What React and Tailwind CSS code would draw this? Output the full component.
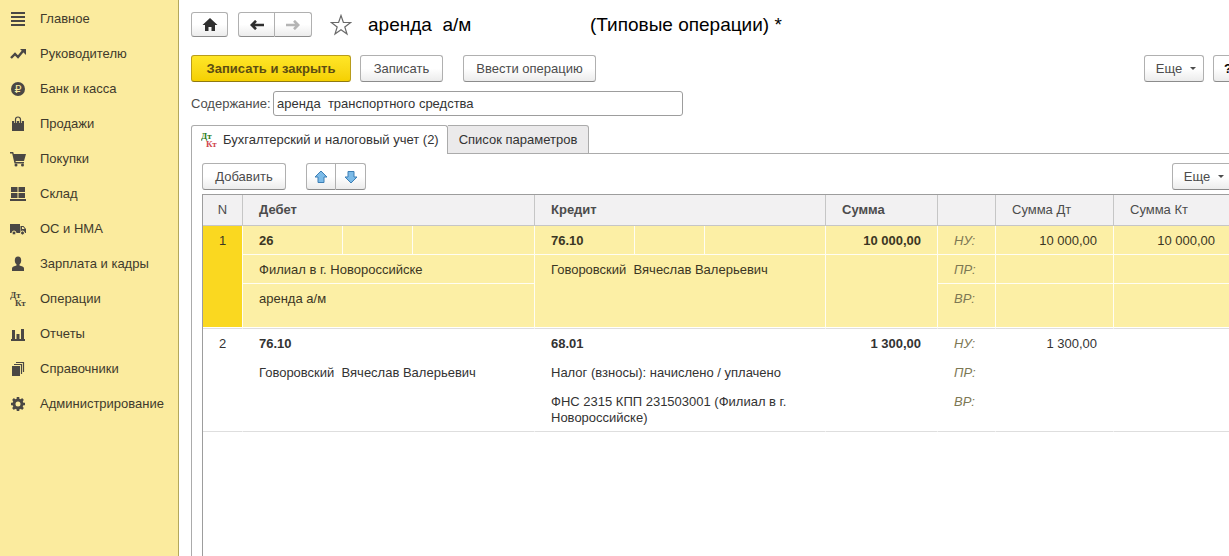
import React, { useState } from 'react';

const DtKt = ({ top, bottom }) => (
  <svg width="16" height="16" viewBox="0 0 16 16" fontFamily="Liberation Serif, serif" fontWeight="bold" fontSize="9">
    <text x="0" y="7" fill={top}>Дт</text>
    <text x="5" y="15" fill={bottom}>Кт</text>
  </svg>
);

const icons = {
  menu: <path d="M1 1h14v2H1zM1 5h14v2H1zM1 9h14v2H1zM1 13h14v2H1z" />,
  trend: (
    <>
      <path d="M1 12l4-4 3 3 5-6" fill="none" stroke="currentColor" strokeWidth="2.4" />
      <path d="M10 3h6v6z" />
    </>
  ),
  ruble: (
    <>
      <circle cx="8" cy="8" r="7" />
      <text x="8" y="12" textAnchor="middle" fontSize="11" fontFamily="DejaVu Sans, sans-serif" fill="#fbeb9e">₽</text>
    </>
  ),
  bag: (
    <>
      <path d="M2 5h12v10H2z" />
      <path d="M5.5 7V3.5a2.5 2.5 0 0 1 5 0V7" fill="none" stroke="#fbeb9e" strokeWidth="2.6" />
      <path d="M5.5 7V3.5a2.5 2.5 0 0 1 5 0V7" fill="none" stroke="currentColor" strokeWidth="1.2" />
    </>
  ),
  cart: (
    <>
      <path d="M0 1h3.2l.6 2H16l-2 7H5.5l.3 1H14v1.5H4.5L2.2 2.5H0z" />
      <circle cx="6" cy="14" r="1.5" />
      <circle cx="12.5" cy="14" r="1.5" />
    </>
  ),
  store: <path d="M1 1h6.5v5H1zM8.5 1H15v5H8.5zM1 7h6.5v5H1zM8.5 7H15v5H8.5zM0 13h16v2H0z" />,
  truck: (
    <>
      <path d="M0 3h10v9H0zM10.5 5h3L16 8v4h-5.5z" />
      <path d="M12 6h1.2l1.5 2H12z" fill="#fbeb9e" />
      <circle cx="4" cy="12" r="2" stroke="#fbeb9e" />
      <circle cx="12.5" cy="12" r="2" stroke="#fbeb9e" />
    </>
  ),
  person: (
    <>
      <ellipse cx="8" cy="4.5" rx="3.2" ry="3.9" />
      <path d="M6.5 7h3v2.5L12.5 10.5q1.500.5 1.500 2V15H2v-2.500q0-1.500 1.500-2l3-1z" />
    </>
  ),
  chart: <path d="M1 13h14v2H1zM2 4h3v10H2zM6.500 8h3v6h-3zM11 3h3v11h-3z" />,
  books: (
    <>
      <path d="M2 5h8v10H2z" />
      <path d="M4 3.500h7.500V13M6 1.500h7.500V11" fill="none" stroke="currentColor" strokeWidth="1.200" />
    </>
  ),
  gear: (
    <>
      <circle cx="8" cy="8" r="4" fill="none" stroke="currentColor" strokeWidth="3" />
      <path d="M8 1v3M8 12v3M1 8h3M12 8h3M3 3l2.200 2.200M10.800 10.800L13 13M3 13l2.200-2.200M10.800 5.200L13 3" stroke="currentColor" strokeWidth="2.600" />
    </>
  ),
};

const sections = [
  { icon: 'menu', title: 'Главное' },
  { icon: 'trend', title: 'Руководителю' },
  { icon: 'ruble', title: 'Банк и касса' },
  { icon: 'bag', title: 'Продажи' },
  { icon: 'cart', title: 'Покупки' },
  { icon: 'store', title: 'Склад' },
  { icon: 'truck', title: 'ОС и НМА' },
  { icon: 'person', title: 'Зарплата и кадры' },
  { icon: 'dtkt', title: 'Операции' },
  { icon: 'chart', title: 'Отчеты' },
  { icon: 'books', title: 'Справочники' },
  { icon: 'gear', title: 'Администрирование' },
];

const Sidebar = () => (
  <nav className="w-[179px] shrink-0 bg-[#fbeb9e] border-r border-[#b3a75c] pt-px">
    {sections.map(({ icon, title }) => (
      <a key={title} href="#" className="flex items-center gap-3.5 h-[35px] pl-2.5 text-[#3f3a2c]">
        {icon === 'dtkt' ? (
          <DtKt top="#4a463c" bottom="#4a463c" />
        ) : (
          <svg width="16" height="16" viewBox="0 0 16 16" fill="currentColor" className="text-[#4a4744]">
            {icons[icon]}
          </svg>
        )}
        {title}
      </a>
    ))}
  </nav>
);

const buttonBase =
  'flex items-center justify-center shrink-0 rounded-[3px] border border-[#b0b0b0] border-b-[#8c8c8c] bg-linear-to-b from-white from-50% to-[#ececec] text-[#4c4c4c]';

const Button = ({ className = '', children, ...props }) => (
  <button type="button" className={`${buttonBase} h-[27px] ${className}`} {...props}>
    {children}
  </button>
);

const MoreButton = () => (
  <Button className="w-[60px] gap-2 pl-1">
    Еще
    <svg width="6" height="3" viewBox="0 0 6 3" fill="#4c4c4c">
      <path d="M0 0h6L3 3z" />
    </svg>
  </Button>
);

const BlueArrow = ({ down }) => (
  <svg width="14" height="14" viewBox="0 0 14 14" className={down ? 'rotate-180' : ''}>
    <path d="M7 1l6 6h-3v5.500H4V7H1z" fill="#7cbbe8" stroke="#3d7fb5" strokeLinejoin="round" />
  </svg>
);

const entries = [
  {
    n: 1,
    debit: '26',
    credit: '76.10',
    debitLines: ['Филиал в г. Новороссийске', 'аренда а/м'],
    creditLines: ['Говоровский  Вячеслав Валерьевич'],
    sum: '10 000,00',
    sumDt: '10 000,00',
    sumKt: '10 000,00',
  },
  {
    n: 2,
    debit: '76.10',
    credit: '68.01',
    debitLines: ['Говоровский  Вячеслав Валерьевич', ''],
    creditLines: ['Налог (взносы): начислено / уплачено', 'ФНС 2315 КПП 231503001 (Филиал в г. Новороссийске)'],
    sum: '1 300,00',
    sumDt: '1 300,00',
    sumKt: '',
  },
];

const Entry = ({ entry, selected }) => {
  const layout = 'border-r border-b pt-[7px] align-top whitespace-pre-wrap';
  const cell = `${layout} ${selected ? 'bg-[#fcefa5] border-[#fffdf2]' : 'bg-white border-white'}`;
  const last = `${cell} border-b-[#dedede] ${selected ? 'shadow-[inset_0_-1px_#fff]' : ''}`;
  const number = `${layout} text-center border-b-[#dedede] ${selected ? 'bg-[#fad820] border-r-[#fffdf2] shadow-[inset_0_-1px_#fff]' : 'bg-white border-r-white'}`;
  const text = 'pl-4 pr-3';
  const amount = 'pr-4 text-right';
  const label = 'pl-4 italic text-[#7d7854]';
  const mergedCredit = entry.creditLines.length === 1;

  return (
    <tbody className={selected ? 'text-[#3b3623]' : 'text-[#333]'}>
      <tr className="h-[29px]">
        <td rowSpan={3} className={number}>{entry.n}</td>
        <td className={`${cell} ${text} font-bold`}>{entry.debit}</td>
        <td className={cell}></td>
        <td className={cell}></td>
        <td className={`${cell} ${text} font-bold`}>{entry.credit}</td>
        <td className={cell}></td>
        <td className={cell}></td>
        <td className={`${cell} ${amount} font-bold`}>{entry.sum}</td>
        <td className={`${cell} ${label}`}>НУ:</td>
        <td className={`${cell} ${amount}`}>{entry.sumDt}</td>
        <td className={`${cell} ${amount}`}>{entry.sumKt}</td>
      </tr>
      <tr className="h-[29px]">
        <td colSpan={3} className={`${cell} ${text}`}>{entry.debitLines[0]}</td>
        <td colSpan={3} rowSpan={mergedCredit ? 2 : 1} className={`${mergedCredit ? last : cell} ${text}`}>
          {entry.creditLines[0]}
        </td>
        <td rowSpan={2} className={last}></td>
        <td className={`${cell} ${label}`}>ПР:</td>
        <td className={cell}></td>
        <td className={cell}></td>
      </tr>
      <tr className="h-[45px]">
        <td colSpan={3} className={`${last} ${text}`}>{entry.debitLines[1]}</td>
        {!mergedCredit && <td colSpan={3} className={`${last} ${text}`}>{entry.creditLines[1]}</td>}
        <td className={`${last} ${label}`}>ВР:</td>
        <td className={last}></td>
        <td className={last}></td>
      </tr>
    </tbody>
  );
};

const EntriesTable = () => {
  const head = 'border-r border-b border-[#c6c6c6] pl-4 text-left';

  return (
    <div className="grow border-l border-t border-[#9d9d9d]">
      <table className="w-full table-fixed border-separate border-spacing-0">
        <colgroup>
          <col className="w-10" />
          <col className="w-[100px]" />
          <col className="w-[70px]" />
          <col className="w-[122px]" />
          <col className="w-[100px]" />
          <col className="w-[70px]" />
          <col className="w-[121px]" />
          <col className="w-28" />
          <col className="w-[58px]" />
          <col className="w-[118px]" />
          <col />
        </colgroup>
        <thead className="bg-[#f2f1f2] text-[#4c4c4c]">
          <tr className="h-[31px]">
            <th className="border-r border-b border-[#c6c6c6] font-normal">N</th>
            <th colSpan={3} className={`${head} font-bold`}>Дебет</th>
            <th colSpan={3} className={`${head} font-bold`}>Кредит</th>
            <th className={`${head} font-bold`}>Сумма</th>
            <th className={head}></th>
            <th className={`${head} font-normal`}>Сумма Дт</th>
            <th className={`${head} font-normal`}>Сумма Кт</th>
          </tr>
        </thead>
        {entries.map((entry) => (
          <Entry key={entry.n} entry={entry} selected={entry.n === 1} />
        ))}
      </table>
    </div>
  );
};

const App = () => {
  const [content, setContent] = useState('аренда  транспортного средства');

  return (
    <div className="flex min-h-screen bg-white font-['Liberation_Sans',Arial,sans-serif] text-[13px] leading-4">
      <Sidebar />

      <main className="flex min-w-0 grow flex-col overflow-hidden pl-3 pt-3">
        {/* the form is a little wider than the window and runs off its right edge */}
        <div className="-mr-3.5 flex grow flex-col">
          <header className="flex h-[25px] items-center">
            <button type="button" aria-label="Домой" className={`${buttonBase} h-[25px] w-[37px]`}>
              <svg width="16" height="14" viewBox="0 0 16 14" fill="#2f2f2f">
                <path d="M8 0l7.500 7H13v6H9.500V9h-3v4H3V7H.5z" />
              </svg>
            </button>
            <div className="ml-2.5 flex">
              <button type="button" aria-label="Назад" className={`${buttonBase} h-[25px] w-[37px] rounded-r-none`}>
                <svg width="14" height="10" viewBox="0 0 14 10" fill="none" stroke="#2f2f2f" strokeWidth="2.600">
                  <path d="M14 5H2M6 .8L1.800 5 6 9.200" />
                </svg>
              </button>
              <button type="button" aria-label="Вперед" className={`${buttonBase} h-[25px] w-[37px] rounded-l-none border-l-0`}>
                <svg width="14" height="10" viewBox="0 0 14 10" fill="none" stroke="#b5b5b5" strokeWidth="2.600">
                  <path d="M0 5h12M8 .8L12.200 5 8 9.200" />
                </svg>
              </button>
            </div>
            <svg width="22" height="22" viewBox="0 0 22 22" fill="none" stroke="#6a6a6a" strokeWidth="1.200" className="ml-[18px]">
              <path d="M11 1.500l2.400 7h7.300l-5.900 4.400 2.200 7.200L11 15.800l-6 4.300 2.200-7.200L1.300 8.500h7.300z" />
            </svg>
            <h1 className="ml-4 flex whitespace-pre text-[19px] leading-6 text-black">
              <span className="w-[222px]">аренда  а/м</span>
              <span>(Типовые операции) *</span>
            </h1>
          </header>

          <div className="mt-[18px] flex">
            <button
              type="button"
              className="h-[27px] w-40 rounded-[3px] border border-[#b89c1c] border-b-[#8f7910] bg-linear-to-b from-[#ffe626] to-[#f5d000] font-bold text-[#5c4d12]"
            >
              Записать и закрыть
            </button>
            <Button className="ml-[9px] w-[83px]">Записать</Button>
            <Button className="ml-5 w-[133px]">Ввести операцию</Button>
            <div className="ml-auto flex gap-[9px]">
              <MoreButton />
              <Button className="w-[30px] font-bold text-black">?</Button>
            </div>
          </div>

          <div className="mt-[9px] flex items-center">
            <label htmlFor="content" className="w-[82px] text-[#4c4c4c]">Содержание:</label>
            <input
              id="content"
              value={content}
              onChange={(e) => setContent(e.target.value)}
              className="h-[25px] w-[410px] rounded-[3px] border border-[#9d9d9d] px-[3px] text-[#333]"
            />
          </div>

          <div role="tablist" className="mt-[9px] flex">
            <button
              type="button"
              role="tab"
              aria-selected="true"
              className="flex h-[29px] w-[257px] items-center gap-1.5 rounded-t-[3px] border border-b-0 border-[#ababab] pl-[9px] text-[#333]"
            >
              <DtKt top="#2e7d1c" bottom="#d0454c" />
              Бухгалтерский и налоговый учет (2)
            </button>
            <button
              type="button"
              role="tab"
              aria-selected="false"
              className="h-[29px] w-[141px] rounded-tr-[3px] border border-l-0 border-[#ababab] bg-[#ebeaeb] text-[#333]"
            >
              Список параметров
            </button>
            <div className="grow border-b border-[#ababab]"></div>
          </div>

          <section className="flex grow flex-col border-l border-[#ababab] pl-2.5 pr-[11px] pt-[9px]">
            <div className="mb-1 flex">
              <Button className="w-[84px]">Добавить</Button>
              <div className="ml-5 flex">
                <Button aria-label="Вверх" className="w-[30px] rounded-r-none">
                  <BlueArrow />
                </Button>
                <Button aria-label="Вниз" className="w-[30px] rounded-l-none border-l-0">
                  <BlueArrow down />
                </Button>
              </div>
              <div className="ml-auto">
                <MoreButton />
              </div>
            </div>
            <EntriesTable />
          </section>
        </div>
      </main>
    </div>
  );
};

export default App;
